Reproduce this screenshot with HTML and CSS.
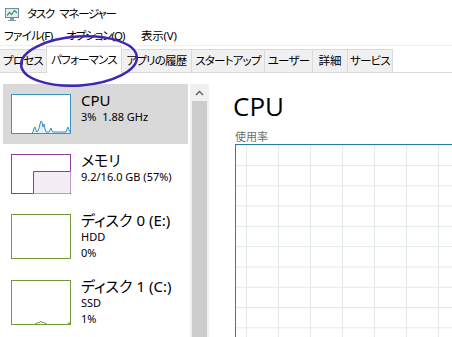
FILE: index.html
```html
<!DOCTYPE html>
<html lang="ja">
<head>
<meta charset="utf-8">
<title>タスク マネージャー</title>
<link rel="stylesheet" href="styles.css">
</head>
<body>
<div class="window">
  <header class="titlebar">
    <svg class="app-icon" width="16" height="16" viewBox="0 0 16 16">
      <rect x="1.5" y="2.5" width="13" height="9" fill="#e3eef6" stroke="#6f8ba5"/>
      <polyline points="3,9.5 5.5,6.5 7.5,8.5 10.5,4.5 13,7" fill="none" stroke="#3f9a4a" stroke-width="1.2"/>
      <rect x="6" y="12" width="4" height="2" fill="#8799ad"/>
      <rect x="4" y="14" width="8" height="1" fill="#8799ad"/>
    </svg>
    <span class="title">タスク マネージャー</span>
  </header>
  <nav class="menubar">
    <span class="menu m-file">ファイル(F)</span>
    <span class="menu m-opt">オプション(O)</span>
    <span class="menu m-view">表示(V)</span>
  </nav>
  <div class="tabs">
    <div class="tab w-proc">プロセス</div>
    <div class="tab active w-perf">パフォーマンス</div>
    <div class="tab w-hist">アプリの履歴</div>
    <div class="tab w-start">スタートアップ</div>
    <div class="tab w-user">ユーザー</div>
    <div class="tab w-det">詳細</div>
    <div class="tab w-svc">サービス</div>
  </div>
  <div class="content">
    <aside class="sidebar">
      <ul class="list">
        <li class="item selected">
          <svg class="thumb" width="60" height="40" viewBox="0 0 60 40">
            <rect x="0.5" y="0.5" width="59" height="39" fill="#ffffff" stroke="#3a93b8"/>
            <polygon points="21,39 22,38 23,34 24,33 25,36 26,38 27,37 28,34 29,30 30,27 31,28 32,33 33,30 34,35 35,38 38,38 39,36 40,34 41,37 42,38 55,38 56,35 57,33 58,36 59,38 59,39" fill="#e4f1f6"/>
            <polyline points="21,39 22,38 23,34 24,33 25,36 26,38 27,37 28,34 29,30 30,27 31,28 32,33 33,30 34,35 35,38 38,38 39,36 40,34 41,37 42,38 55,38 56,35 57,33 58,36 59,38" fill="none" stroke="#3a93b8" stroke-width="1"/>
          </svg>
          <div class="info">
            <div class="name">CPU</div>
            <div class="sub">3%&nbsp; 1.88 GHz</div>
          </div>
        </li>
        <li class="item">
          <svg class="thumb" width="60" height="40" viewBox="0 0 60 40">
            <rect x="0.5" y="0.5" width="59" height="39" fill="#ffffff" stroke="#8c3e9c"/>
            <rect x="22" y="17" width="37.5" height="22.5" fill="#f5edf6"/>
            <polyline points="22.5,39.5 22.5,17.5 59.5,17.5" fill="none" stroke="#8c3e9c" stroke-width="1"/>
          </svg>
          <div class="info">
            <div class="name">メモリ</div>
            <div class="sub">9.2/16.0 GB (57%)</div>
          </div>
        </li>
        <li class="item tall">
          <svg class="thumb" width="60" height="45" viewBox="0 0 60 45">
            <rect x="0.5" y="0.5" width="59" height="44" fill="#ffffff" stroke="#729a38"/>
          </svg>
          <div class="info">
            <div class="name">ディスク 0 (E:)</div>
            <div class="sub">HDD</div>
            <div class="sub">0%</div>
          </div>
        </li>
        <li class="item tall">
          <svg class="thumb" width="60" height="45" viewBox="0 0 60 45">
            <rect x="0.5" y="0.5" width="59" height="44" fill="#ffffff" stroke="#729a38"/>
            <polyline points="24,44 26,43 28,42.5 30,41.5 32,42.5 34,43 36,44" fill="none" stroke="#729a38" stroke-width="1"/>
            <polyline points="57,44 58,42.5 59,44" fill="none" stroke="#729a38" stroke-width="1"/>
          </svg>
          <div class="info">
            <div class="name">ディスク 1 (C:)</div>
            <div class="sub">SSD</div>
            <div class="sub">1%</div>
          </div>
        </li>
      </ul>
      <div class="scrollbar">
        <div class="scroll-up">
          <svg width="9" height="6" viewBox="0 0 9 6"><polyline points="1,5 4.5,1.5 8,5" fill="none" stroke="#606060" stroke-width="1.4"/></svg>
        </div>
        <div class="scroll-thumb"></div>
      </div>
    </aside>
    <main class="detail">
      <h1 class="heading">CPU</h1>
      <div class="label">使用率</div>
      <div class="graph"></div>
    </main>
  </div>
  <svg class="highlight" width="452" height="337" viewBox="0 0 452 337">
    <ellipse cx="79" cy="61" rx="58" ry="24.5" transform="rotate(-4 79 61)" fill="none" stroke="#4126b4" stroke-width="2.5"/>
  </svg>
</div>
</body>
</html>
```

FILE: styles.css
```css
* { box-sizing: border-box; }
html, body {
  margin: 0;
  padding: 0;
  background: #ffffff;
}
body {
  width: 452px;
  height: 337px;
  overflow: hidden;
  font-family: "Noto Sans", "Noto Sans CJK JP", sans-serif;
  font-feature-settings: "palt";
  color: #000000;
}
.window {
  position: relative;
  width: 452px;
  height: 337px;
  overflow: hidden;
}
.titlebar {
  height: 27px;
  display: flex;
  align-items: center;
  padding-left: 4px;
  gap: 7px;
}
.app-icon { flex: none; }
.title {
  font-size: 11.5px;
  line-height: 16px;
  letter-spacing: -1.3px;
  word-spacing: 4px;
  white-space: nowrap;
}
.menubar {
  height: 18px;
  display: flex;
  align-items: center;
  font-size: 11.5px;
  line-height: 16px;
}
.menu { display: block; white-space: nowrap; }
.m-file { margin-left: 4px; width: 62px; letter-spacing: -0.6px; }
.m-opt { width: 75px; letter-spacing: -1px; }
.m-view { letter-spacing: -0.2px; }
.tabs {
  height: 28px;
  display: flex;
  align-items: flex-end;
  border-top: 1px solid #efefef;
  border-bottom: 1px solid #d9d9d9;
}
.tab {
  height: 23px;
  background: #f0f0f0;
  border-top: 1px solid #dadada;
  border-right: 1px solid #dadada;
  font-size: 11.5px;
  line-height: 21px;
  letter-spacing: -0.8px;
  text-align: center;
  white-space: nowrap;
  overflow: hidden;
  color: #000;
  flex: none;
}
.tab.active {
  height: 27px;
  margin-bottom: -1px;
  background: #ffffff;
  border-left: 1px solid #dadada;
  margin-left: -1px;
  line-height: 25px;
}
.w-proc { width: 47px; }
.w-perf { width: 76px; }
.w-hist { width: 70px; }
.w-start { width: 73px; }
.w-user { width: 48px; }
.w-det { width: 35px; letter-spacing: 0; }
.w-svc { width: 45px; }
.content {
  display: flex;
  height: 264px;
}
.sidebar {
  width: 210px;
  flex: none;
  display: flex;
  padding-top: 11px;
  gap: 2px;
}
.list {
  list-style: none;
  margin: 0 0 0 3px;
  padding: 0;
  width: 185px;
}
.item {
  height: 60px;
  display: flex;
  align-items: flex-start;
}
.item.tall { height: 66px; }
.item.selected { background: #d9d9d9; }
.thumb {
  flex: none;
  margin: 10px 0 0 8px;
  display: block;
}
.info {
  margin-left: 10px;
  padding-top: 7px;
}
.name {
  font-size: 15px;
  line-height: 18px;
  white-space: nowrap;
}
.sub {
  font-size: 11px;
  line-height: 16px;
  white-space: nowrap;
}
.scrollbar {
  width: 19px;
  flex: none;
  background: #f0f0f0;
  display: flex;
  flex-direction: column;
}
.scroll-up {
  height: 17px;
  display: flex;
  align-items: center;
  justify-content: center;
}
.scroll-up svg { display: block; }
.scroll-thumb {
  flex: 1;
  margin: 0 2px;
  background: #cdcdcd;
}
.detail {
  flex: 1;
  padding: 17px 0 0 25px;
  min-width: 0;
}
.heading {
  margin: 0 0 0 -2px;
  font-family: "Open Sans", "Noto Sans", sans-serif;
  font-weight: 400;
  font-size: 26px;
  line-height: 32px;
  color: #000;
}
.label {
  margin-top: 8px;
  font-size: 11px;
  line-height: 14px;
  color: #707070;
}
.graph {
  width: 260px;
  height: 220px;
  border: 1px solid #2a7ea4;
  border-right: none;
  background-color: #ffffff;
  background-image:
    linear-gradient(to right, #e2e9ec 1px, transparent 1px),
    linear-gradient(to bottom, #e2e9ec 1px, transparent 1px);
  background-size: 32px 100%, 100% 20.3px;
  background-position: 10px 0, 0 20px;
}
.highlight {
  position: absolute;
  left: 0;
  top: 0;
  pointer-events: none;
}
```
